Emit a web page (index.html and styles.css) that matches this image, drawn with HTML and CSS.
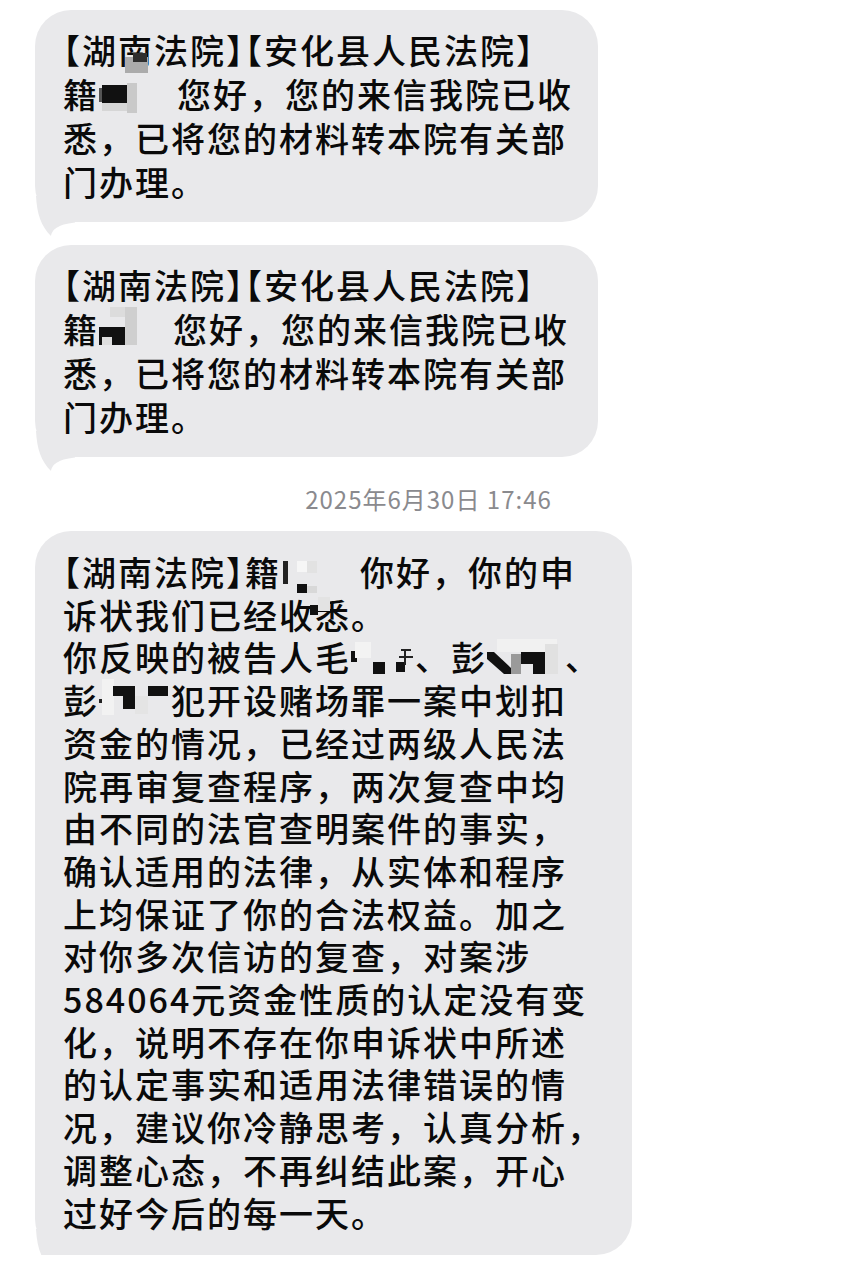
FILE: index.html
```html
<!DOCTYPE html>
<html lang="zh-CN">
<head>
<meta charset="utf-8">
<title>短信</title>
<link rel="stylesheet" href="styles.css">
</head>
<body>
<div class="thread">
  <div class="msg msg-short">
    <p class="txt"><span class="br">【</span>湖南法院<span class="br">】【</span>安化县人民法院<span class="br">】</span><br>籍<svg class="rd" width="78" height="44" viewBox="0 0 78 44"><rect x="0" y="16" width="3" height="14" fill="#555"/><rect x="3" y="13" width="25" height="18" fill="#111"/><rect x="28" y="11" width="10" height="30" fill="#c9c9c9"/><rect x="3" y="31" width="25" height="8" fill="#d6d6d6"/></svg>您好，您的来信我院已收<br>悉，已将您的材料转本院有关部<br>门办理。</p>
    <span class="patch patch-a1"></span><span class="patch patch-a2"></span>
    <svg class="tail" width="46" height="42" viewBox="0 0 46 42"><path d="M1 0 C2 18 6 30 16 40 C17 34 22 28.5 40 26.5 L40 0 Z"/></svg>
  </div>

  <div class="msg msg-short">
    <p class="txt"><span class="br">【</span>湖南法院<span class="br">】【</span>安化县人民法院<span class="br">】</span><br>籍<svg class="rd" width="74" height="44" viewBox="0 0 74 44"><rect x="0" y="20" width="26" height="18" fill="#111"/><rect x="3" y="30" width="10" height="8" fill="#dedede"/><rect x="26" y="0" width="12" height="38" fill="#cfcfcf"/><rect x="11" y="0" width="15" height="10" fill="#dcdcdc"/></svg>您好，您的来信我院已收<br>悉，已将您的材料转本院有关部<br>门办理。</p>
    <svg class="tail" width="46" height="42" viewBox="0 0 46 42"><path d="M1 0 C2 18 6 30 16 40 C17 34 22 28.5 40 26.5 L40 0 Z"/></svg>
  </div>

  <div class="time">2025年6月30日 17:46</div>

  <div class="msg msg-long">
    <p class="txt"><span class="br">【</span>湖南法院<span class="br">】</span>籍<svg class="rd" width="79" height="42" viewBox="0 0 79 42"><rect x="2" y="10" width="5" height="23" fill="#222"/><rect x="16" y="10" width="10" height="11" fill="#f6f6f6"/><rect x="16" y="33" width="10" height="9" fill="#111"/><rect x="26" y="35" width="10" height="7" fill="#d8d8d8"/><rect x="26" y="10" width="10" height="12" fill="#e2e2e2"/></svg>你好，你的申<br>诉状我们已经收悉。<br>你反映的被告人毛<svg class="rd" width="64" height="42" viewBox="0 0 64 42"><rect x="0" y="15" width="6" height="11" fill="#111"/><rect x="4" y="6" width="16" height="16" fill="#f3f3f3"/><rect x="22" y="26" width="12" height="12" fill="#111"/><rect x="45" y="26" width="9" height="10" fill="#111"/><rect x="50" y="13" width="10" height="2" fill="#222"/><rect x="48" y="20" width="14" height="2" fill="#222"/><rect x="53" y="13" width="2" height="16" fill="#222"/></svg>、彭<svg class="rd" width="78" height="42" viewBox="0 0 78 42"><rect x="10" y="3" width="60" height="13" fill="#f1f1f1"/><polygon points="0,16 7,16 24,32 24,38 17,38 0,23" fill="#111"/><rect x="24" y="18" width="10" height="20" fill="#9a9a9a"/><rect x="34" y="16" width="24" height="12" fill="#111"/><rect x="46" y="28" width="12" height="10" fill="#111"/><rect x="58" y="8" width="13" height="30" fill="#e1e1e1"/></svg>、<br>彭<svg class="rd" width="72" height="42" viewBox="0 0 72 42"><rect x="0" y="20" width="3" height="4" fill="#222"/><rect x="3" y="0" width="12" height="36" fill="#f2f2f2"/><rect x="14" y="7" width="22" height="10" fill="#111"/><rect x="24" y="17" width="12" height="13" fill="#111"/><rect x="36" y="17" width="13" height="18" fill="#e4e4e4"/><rect x="49" y="7" width="20" height="10" fill="#111"/></svg>犯开设赌场罪一案中划扣<br>资金的情况，已经过两级人民法<br>院再审复查程序，两次复查中均<br>由不同的法官查明案件的事实，<br>确认适用的法律，从实体和程序<br>上均保证了你的合法权益。加之<br>对你多次信访的复查，对案涉<br>584064元资金性质的认定没有变<br>化，说明不存在你申诉状中所述<br>的认定事实和适用法律错误的情<br>况，建议你冷静思考，认真分析，<br>调整心态，不再纠结此案，开心<br>过好今后的每一天。</p>
    <span class="patch patch-c1"></span><span class="patch patch-c2"></span>
    <svg class="tail" width="46" height="42" viewBox="0 0 46 42"><path d="M1 0 C2 18 6 30 16 40 C17 34 22 28.5 40 26.5 L40 0 Z"/></svg>
  </div>
</div>
</body>
</html>
```

FILE: styles.css
```css
html, body {
  margin: 0;
  padding: 0;
  background: #ffffff;
}

body {
  font-family: "Noto Sans CJK SC", "Noto Sans", sans-serif;
  color: #0a0a0a;
}

.thread {
  display: flex;
  flex-direction: column;
  align-items: flex-start;
  padding: 10px 0 0 35px;
}

.msg {
  position: relative;
  box-sizing: border-box;
  background: #e9e9eb;
  border-radius: 36px;
  padding: 18px 0 18px 28px;
}

.msg-short {
  width: 563px;
  margin-bottom: 23px;
}

.msg-short:nth-child(2) {
  margin-bottom: 0;
}

.msg-long {
  width: 597px;
  padding: 20px 0 21px 28px;
}

.txt {
  position: relative;
  z-index: 1;
  margin: 0;
  font-size: 34px;
  font-weight: 500;
  letter-spacing: 2px;
  line-height: 44px;
  white-space: nowrap;
}

.msg-long .txt {
  line-height: 42.7px;
}

.br {
  font-feature-settings: "halt" 1;
}

.rd {
  display: inline-block;
  vertical-align: top;
}

.tail {
  position: absolute;
  left: 0;
  bottom: -16px;
  fill: #e9e9eb;
}

.patch {
  position: absolute;
  z-index: 2;
}

.patch-a1 {
  left: 90px;
  top: 47px;
  width: 23px;
  height: 16px;
  background: #ababab;
}

.patch-a2 {
  left: 98px;
  top: 43px;
  width: 14px;
  height: 9px;
  background: #2e2e2e;
}

.patch-c1 {
  left: 275px;
  top: 74px;
  width: 8px;
  height: 10px;
  background: #111;
}

.patch-c2 {
  left: 283px;
  top: 66px;
  width: 12px;
  height: 14px;
  background: #e3e3e3;
}

.time {
  align-self: stretch;
  margin: 26px 0 16px -35px;
  text-align: center;
  font-size: 24px;
  line-height: 32px;
  letter-spacing: 1px;
  color: #8a8a8e;
}
```
